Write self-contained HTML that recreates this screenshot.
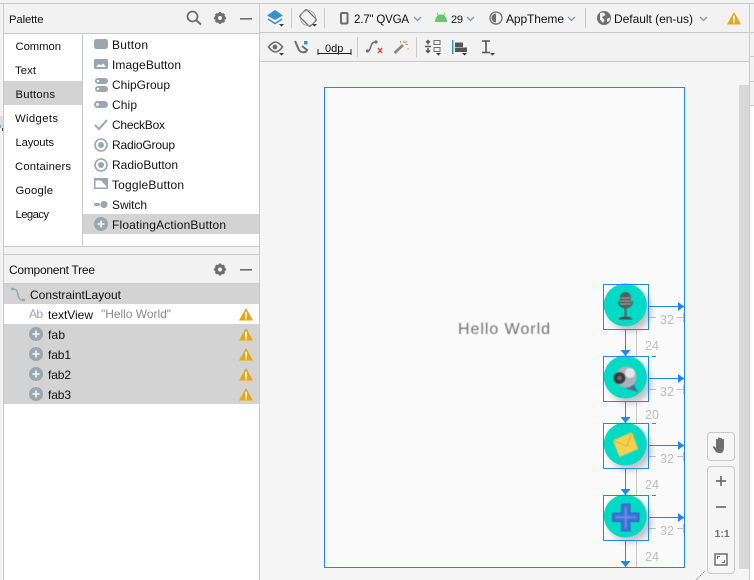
<!DOCTYPE html>
<html><head><meta charset="utf-8"><style>
html,body{margin:0;padding:0;width:754px;height:580px;overflow:hidden;background:#f2f2f2}
svg{display:block;position:absolute;left:0;top:0}
text{font-family:"Liberation Sans",sans-serif;font-size:12px;fill:#111}
.g{fill:#9aa7b0}
.l{fill:#bdbdbd;font-size:12.5px}
.c{font-size:11.3px}
</style></head><body>
<svg width="754" height="580" viewBox="0 0 754 580" xmlns="http://www.w3.org/2000/svg">
<defs>
<filter id="b" x="-20%" y="-20%" width="140%" height="140%"><feGaussianBlur stdDeviation="0.45"/></filter>
<filter id="s" x="-50%" y="-50%" width="200%" height="200%"><feGaussianBlur stdDeviation="3.500"/></filter>
<g id="warn"><path d="M7 0L14 12.500H0Z" fill="#f0a30a"/><rect x="6" y="3.800" width="2" height="5" fill="#fff"/><rect x="6" y="9.500" width="2" height="1.800" fill="#fff"/></g>
<g id="plus"><circle cx="7" cy="7" r="7" fill="#9aa7b0"/><path d="M7 3.500V10.500M3.500 7H10.500" stroke="#e8e8e8" stroke-width="2"/></g>
<g id="radio"><circle cx="7" cy="7" r="6" fill="none" stroke="#9aa7b0" stroke-width="1.600"/><circle cx="7" cy="7" r="3" fill="#9aa7b0"/></g>
<g id="gear"><circle cx="7" cy="7" r="3.600" fill="none" stroke="#6e6e6e" stroke-width="3.200"/><path d="M7 1V3M7 11V13M1 7H3M11 7H13M2.800 2.800L4.200 4.200M9.800 9.800L11.200 11.200M2.800 11.200L4.200 9.800M9.800 4.200L11.200 2.800" stroke="#6e6e6e" stroke-width="2.400"/></g>
<path id="chev" d="M0 0L3.500 3.500L7 0" fill="none" stroke="#8a949b" stroke-width="1.300"/>
<path id="tri" d="M0 0H5L2.500 2.600Z" fill="#3c3c3c"/>
<g id="arrR"><path d="M0 0H36" stroke="#1e88f0" stroke-width="1"/><path d="M30 -4.500L36 0L30 4.500Z" fill="#1e88f0"/></g>
<g id="arrD"><path d="M0 0V27" stroke="#1e88f0" stroke-width="1"/><path d="M-5 21H5L0 27Z" fill="#1e88f0"/></g>
</defs>

<!-- base -->
<rect width="754" height="580" fill="#f2f2f2"/>
<rect x="0" y="3" width="754" height="1" fill="#c9c9c9"/>
<rect x="3" y="4" width="1" height="576" fill="#c9c9c9"/>
<rect x="0" y="116" width="3" height="12" fill="#dcdcdc"/>
<rect x="0" y="125" width="1" height="3" fill="#6fb5e0"/>
<rect x="2" y="128" width="1" height="3" fill="#5a2a3a"/>

<!-- palette -->
<rect x="4" y="34" width="255" height="212" fill="#fff"/>
<rect x="4" y="33" width="255" height="1" fill="#c9c9c9"/>
<rect x="82" y="34" width="1" height="212" fill="#c9c9c9"/>
<rect x="4" y="246" width="255" height="1" fill="#c9c9c9"/>
<rect x="4" y="254" width="255" height="1" fill="#c9c9c9"/>
<rect x="4" y="81" width="78" height="24" fill="#d3d3d3"/>
<rect x="83" y="214" width="176" height="20" fill="#d3d3d3"/>
<rect x="259" y="4" width="1" height="576" fill="#c9c9c9"/>
<text x="9" y="23" class="c" textLength="34.500">Palette</text>
<circle cx="192.500" cy="16.500" r="5" fill="none" stroke="#6e6e6e" stroke-width="1.800"/><path d="M196 20L201 24.500" stroke="#6e6e6e" stroke-width="2"/>
<use href="#gear" x="213" y="11"/>
<rect x="240" y="18" width="12" height="1.600" fill="#6e6e6e"/>

<text x="15.500" y="50" class="c" textLength="45.500">Common</text>
<text x="15" y="74" class="c" textLength="21">Text</text>
<text x="15.500" y="98" class="c" textLength="39.500">Buttons</text>
<text x="15" y="122" class="c" textLength="43">Widgets</text>
<text x="15.500" y="146" class="c" textLength="38.500">Layouts</text>
<text x="15" y="170" class="c" textLength="56">Containers</text>
<text x="15.500" y="194" class="c" textLength="37.500">Google</text>
<text x="15.500" y="218" class="c" textLength="33.500">Legacy</text>

<text x="112" y="49" textLength="36">Button</text>
<text x="112" y="69" textLength="69">ImageButton</text>
<text x="112" y="89" textLength="58">ChipGroup</text>
<text x="112" y="109" textLength="25">Chip</text>
<text x="112" y="129" textLength="53">CheckBox</text>
<text x="112" y="149" textLength="63">RadioGroup</text>
<text x="112" y="169" textLength="66">RadioButton</text>
<text x="112" y="189" textLength="72">ToggleButton</text>
<text x="112" y="209" textLength="35">Switch</text>
<text x="112" y="229" textLength="114">FloatingActionButton</text>

<rect x="94" y="39" width="14" height="10" rx="2.500" class="g"/>
<rect x="94" y="59" width="14" height="10" rx="1.500" class="g"/><path d="M96 67L99 64L101 65.500L103 63.500L106 67Z" fill="#fff"/>
<rect x="95" y="78" width="13" height="6" rx="3" class="g"/><rect x="95" y="86" width="13" height="6" rx="3" class="g"/><circle cx="98" cy="81" r="1.200" fill="#fff"/><circle cx="98" cy="89" r="1.200" fill="#fff"/>
<rect x="94" y="101" width="14" height="7" rx="3.500" class="g"/><circle cx="97.500" cy="104.500" r="1.500" fill="#fff"/>
<path d="M95 125L99 129L107 120" fill="none" stroke="#9aa7b0" stroke-width="2"/>
<use href="#radio" x="94" y="138"/>
<use href="#radio" x="94" y="158"/>
<rect x="94" y="178" width="14" height="11" class="g"/><path d="M95.500 180.500V187.500H106.500V186.500L101 180.500Z" fill="#fff"/>
<rect x="94" y="203" width="6" height="3" rx="1.500" class="g"/><circle cx="104" cy="204.500" r="3.600" class="g"/>
<use href="#plus" x="94" y="217"/>

<!-- component tree -->
<rect x="4" y="283" width="255" height="1" fill="#c9c9c9"/>
<rect x="4" y="284" width="255" height="297" fill="#fff"/>
<rect x="4" y="284" width="255" height="20" fill="#d3d3d3"/>
<rect x="4" y="324" width="255" height="80" fill="#d3d3d3"/>
<text x="9" y="274" textLength="86">Component Tree</text>
<use href="#gear" x="213" y="262.500"/>
<rect x="240" y="269" width="12" height="1.600" fill="#6e6e6e"/>
<path d="M13 289C17 289 17 291 18 295C19 299 20 300 23 300" fill="none" stroke="#9aa7b0" stroke-width="1.500"/><circle cx="12.500" cy="289" r="1.500" class="g"/><circle cx="23.500" cy="300" r="1.500" class="g"/>
<text x="30" y="299" textLength="91">ConstraintLayout</text>
<text x="29" y="318" textLength="14" style="fill:#9aa7b0">Ab</text>
<text x="48" y="319" textLength="45">textView</text>
<text x="101" y="318" textLength="70" style="fill:#8a8a8a">"Hello World"</text>
<text x="48" y="339" textLength="17">fab</text>
<text x="48" y="359" textLength="23">fab1</text>
<text x="48" y="379" textLength="23">fab2</text>
<text x="48" y="399" textLength="23">fab3</text>
<use href="#plus" x="29" y="327"/>
<use href="#plus" x="29" y="347"/>
<use href="#plus" x="29" y="367"/>
<use href="#plus" x="29" y="387"/>
<use href="#warn" x="239" y="308"/>
<use href="#warn" x="239" y="328"/>
<use href="#warn" x="239" y="348"/>
<use href="#warn" x="239" y="368"/>
<use href="#warn" x="239" y="388"/>

<!-- toolbars -->
<rect x="260" y="32" width="490" height="1" fill="#c9c9c9"/>
<rect x="260" y="61" width="490" height="1" fill="#c9c9c9"/>
<rect x="260" y="62" width="490" height="518" fill="#f5f5f5"/>

<!-- layers icon -->
<path d="M275 10L283 15.500L275 20L267 15.500Z" fill="#3592d2"/>
<path d="M268 19L275 23.500L282 19" fill="none" stroke="#3592d2" stroke-width="1.600"/>
<use href="#tri" x="279" y="24"/>
<rect x="291" y="8" width="1" height="20" fill="#c9c9c9"/>
<!-- rotate icon -->
<g transform="rotate(-45 308 18)"><rect x="303" y="10.500" width="10" height="15" rx="1.500" fill="none" stroke="#6e6e6e" stroke-width="1.300"/></g>
<circle cx="308" cy="18" r="7.500" fill="none" stroke="#9a9a9a" stroke-width="0.800"/>
<use href="#tri" x="312" y="24"/>
<rect x="324" y="8" width="1" height="20" fill="#c9c9c9"/>
<!-- phone -->
<rect x="341" y="13" width="6.500" height="10.500" rx="1" fill="none" stroke="#6e6e6e" stroke-width="2"/>
<text x="354" y="23" style="font-size:11.500px" textLength="55">2.7" QVGA</text>
<use href="#chev" x="414" y="17"/>
<!-- android -->
<path d="M435 22C435 17 438 14.500 441 14.500C444 14.500 447 17 447 22Z" fill="#6cc46c"/><path d="M437 13L438.500 15.500M445 13L443.500 15.500" stroke="#6cc46c" stroke-width="1"/>
<text x="451" y="23" style="font-size:11px" textLength="12">29</text>
<use href="#chev" x="467" y="17"/>
<!-- theme -->
<circle cx="496" cy="18" r="6" fill="none" stroke="#6e6e6e" stroke-width="1.300"/><path d="M496 13.500A4.500 4.500 0 0 0 496 22.500Z" fill="#6e6e6e"/>
<text x="506" y="23" textLength="58">AppTheme</text>
<use href="#chev" x="568" y="17"/>
<rect x="585" y="8" width="1" height="20" fill="#c9c9c9"/>
<!-- globe -->
<circle cx="604" cy="18" r="7" fill="#6e6e6e"/><path d="M600 13L604 12.500L605.500 15L602 17L604.500 20L603 23L600 19.500Z" fill="#f2f2f2"/><path d="M607 19L610 17.500L609.500 21L607 22Z" fill="#f2f2f2"/>
<text x="614" y="23" textLength="79">Default (en-us)</text>
<use href="#chev" x="700" y="17"/>
<use href="#warn" x="727" y="12"/>

<!-- toolbar 2 -->
<path d="M268.500 47C271 43.500 274 42 275.500 42C277 42 280 43.500 282.500 47C280 50.500 277 52 275.500 52C274 52 271 50.500 268.500 47Z" fill="none" stroke="#6e6e6e" stroke-width="1.600"/><circle cx="275" cy="47" r="2.400" fill="#6e6e6e"/>
<use href="#tri" x="279" y="53"/>
<path d="M295 41L299 50C301 53 306 53 307 50L302 46" fill="none" stroke="#6e6e6e" stroke-width="2"/><rect x="304" y="41" width="3.500" height="3.500" fill="#3592d2"/>
<text x="325" y="52" style="font-size:11px">0dp</text>
<path d="M318 49V55M318 53.500H351M351 49V55" stroke="#222" stroke-width="1" fill="none"/>
<rect x="357" y="37" width="1" height="20" fill="#c9c9c9"/>
<path d="M367 51C370 51 370 49 371 46C372 43 373 42 376 42" fill="none" stroke="#6e6e6e" stroke-width="1.500"/><circle cx="367.500" cy="51" r="1.600" fill="#6e6e6e"/><circle cx="376" cy="42" r="1.600" fill="#6e6e6e"/>
<path d="M378 48L382 53M382 48L378 53" stroke="#d9534f" stroke-width="1.500"/>
<path d="M394.500 53L403 45" stroke="#8a8a8a" stroke-width="2.800"/><path d="M404 40.500V43M408 44.500H405.500M407 41L405 43M400.500 41V43M408 48V49.500" stroke="#c98a55" stroke-width="1"/>
<rect x="416" y="37" width="1" height="20" fill="#c9c9c9"/>
<path d="M428 44.500V41M426 42.500L428 40.500L430 42.500M428 48V52.500M426 50.500L428 52.500L430 50.500M425 46.500H431" stroke="#555" stroke-width="1.500" fill="none"/><rect x="434" y="40.500" width="6" height="4" fill="none" stroke="#6e6e6e"/><rect x="434" y="47.500" width="6" height="4" fill="none" stroke="#6e6e6e"/>
<use href="#tri" x="436" y="53"/>
<rect x="452" y="40" width="1.500" height="14" fill="#3592d2"/><rect x="455" y="42.500" width="8" height="4.500" fill="#555"/><rect x="455" y="47.500" width="12" height="4.500" fill="#555"/>
<use href="#tri" x="462" y="53"/>
<path d="M482 41H490M486 41V52M482 52.500H490" stroke="#555" stroke-width="1.600" fill="none"/>
<use href="#tri" x="490" y="53"/>

<!-- scroll and right column -->
<rect x="739" y="85" width="10" height="484" fill="#d8d8d8"/>
<rect x="749" y="4" width="1" height="576" fill="#c9c9c9"/>
<rect x="750" y="32" width="4" height="1" fill="#c9c9c9"/>
<rect x="750" y="81" width="4" height="1" fill="#c9c9c9"/>
<rect x="750" y="106" width="4" height="474" fill="#fff"/>
<rect x="750" y="105" width="4" height="1" fill="#c9c9c9"/>
<rect x="750" y="56" width="4" height="1" fill="#c9c9c9"/>

<!-- blueprint -->
<rect x="324.500" y="87.500" width="360" height="480" fill="#fafafa" stroke="#1e88f0" stroke-width="1"/>
<text x="458" y="334" textLength="92" filter="url(#b)" style="font-size:16px;fill:#707070">Hello World</text>

<!-- gray constraint lines -->
<path d="M636.500 329V356M636.500 401V423M636.500 468V495M636.500 540V567" stroke="#c8c8c8" stroke-width="1"/>
<text x="660" y="324" class="l">32</text>
<text x="660" y="396" class="l">32</text>
<text x="660" y="463" class="l">32</text>
<text x="660" y="535" class="l">32</text>
<text x="645" y="350" class="l">24</text>
<text x="645" y="419" class="l">20</text>
<text x="645" y="489" class="l">24</text>
<text x="645" y="561" class="l">24</text>
<path d="M648 317.500H656M677 317.500H683M683.500 313V322M648 389.500H656M677 389.500H683M683.500 385V394M648 456.500H656M677 456.500H683M683.500 452V461M648 528.500H656M677 528.500H683M683.500 524V533" stroke="#c0c0c0" stroke-width="1" fill="none"/>
<path d="M652 356.500H656M652 423.500H656M652 495.500H656" stroke="#1e88f0" stroke-width="1"/>

<!-- shadows -->
<g filter="url(#s)" fill="#000" opacity=".24">
<circle cx="630" cy="310" r="21"/><circle cx="630" cy="382" r="21"/><circle cx="630" cy="449" r="21"/><circle cx="630" cy="521" r="21"/>
</g>
<!-- fabs -->
<g fill="#03dac5">
<circle cx="625.300" cy="305" r="21.500"/><circle cx="625.300" cy="377" r="21.500"/><circle cx="625.300" cy="444" r="21.500"/><circle cx="625.300" cy="516" r="21.500"/>
</g>
<!-- mic -->
<g filter="url(#b)">
<path d="M618.500 301C618.500 310 632.500 310 632.500 301" fill="none" stroke="#3f5a58" stroke-width="1.300"/>
<rect x="620" y="292" width="11" height="16" rx="5.500" fill="#5a5a5a"/><path d="M620.500 298H630.500M620.500 301H630.500M620.500 304H630.500" stroke="#a0a0a0" stroke-width="1"/>
<rect x="624.500" y="308" width="2" height="8" fill="#555"/><path d="M618.500 319.500C620 315.500 631 315.500 632.500 319.500Z" fill="#4a4a4a"/>
</g>
<!-- webcam -->
<g filter="url(#b)">
<path d="M619 385L633 383L638 392L628 389Z" fill="#4a6a9a"/>
<circle cx="626" cy="377" r="10.500" fill="#aeb2b8"/><circle cx="630" cy="373" r="5" fill="#e4e6e8"/>
<circle cx="619.500" cy="378" r="6" fill="#38383c"/><circle cx="619.500" cy="378" r="2.300" fill="#6a6a6a"/>
</g>
<!-- envelope -->
<g filter="url(#b)">
<path d="M613 440.500L632 432L638 449L619.500 457Z" fill="#f7d050"/><path d="M613 440.500L627 446L632 432" fill="none" stroke="#c5a53a" stroke-width=".8"/>
</g>
<!-- plus -->
<g filter="url(#b)">
<path d="M621.500 504H630V513H639V521.500H630V531H621.500V521.500H612.500V513H621.500Z" fill="#3f6fd8" stroke="#2f56b0" stroke-width=".8"/>
<path d="M625.700 507V528M615.500 517.300H636" stroke="#5f90ea" stroke-width="2"/>
</g>
<!-- selection boxes -->
<g fill="none" stroke="#1e88f0" stroke-width="1">
<rect x="603.500" y="284.500" width="45" height="45"/>
<rect x="603.500" y="356.500" width="45" height="45"/>
<rect x="603.500" y="423.500" width="45" height="45"/>
<rect x="603.500" y="495.500" width="45" height="45"/>
</g>
<use href="#arrR" x="648" y="306.500"/>
<use href="#arrR" x="648" y="378.500"/>
<use href="#arrR" x="648" y="445.500"/>
<use href="#arrR" x="648" y="517.500"/>
<use href="#arrD" x="625.500" y="329"/>
<path d="M625.500 401V423" stroke="#1e88f0" stroke-width="1"/><path d="M620.500 417H630.500L625.500 423Z" fill="#1e88f0"/>
<use href="#arrD" x="625.500" y="468"/>
<use href="#arrD" x="625.500" y="540"/>

<!-- floating controls -->
<rect x="707.500" y="432.500" width="27" height="28" rx="3.500" fill="#f5f5f5" stroke="#c9c9c9"/>
<path d="M716 452L713 447.500C712.500 446 714 445.500 715 447L716 448V440C716 438.500 718 438.500 718 440V438.500C718 437 720 437 720 438.500V439C720 437.500 722 437.500 722 439V440C722 438.500 724 438.500 724 440V447C724 450 723 452 721.500 453H718Z" fill="#6e6e6e"/>
<rect x="707.500" y="466.500" width="27" height="107" rx="3.500" fill="#f5f5f5" stroke="#c9c9c9"/>
<path d="M716 481H726M721 476V486" stroke="#6e6e6e" stroke-width="1.700"/>
<path d="M716 507H726" stroke="#6e6e6e" stroke-width="1.700"/>
<text x="714.500" y="537" style="font-size:10.500px;font-weight:bold;fill:#6e6e6e">1:1</text>
<rect x="715" y="554" width="12" height="11" fill="none" stroke="#6e6e6e" stroke-width="1.500"/><path d="M717.500 559V556.500H720M724.500 560V562.500H722" fill="none" stroke="#6e6e6e"/>
<path d="M696 580L705 571" stroke="#777" stroke-width="1" stroke-dasharray="1 1"/>
</svg>
</body></html>
